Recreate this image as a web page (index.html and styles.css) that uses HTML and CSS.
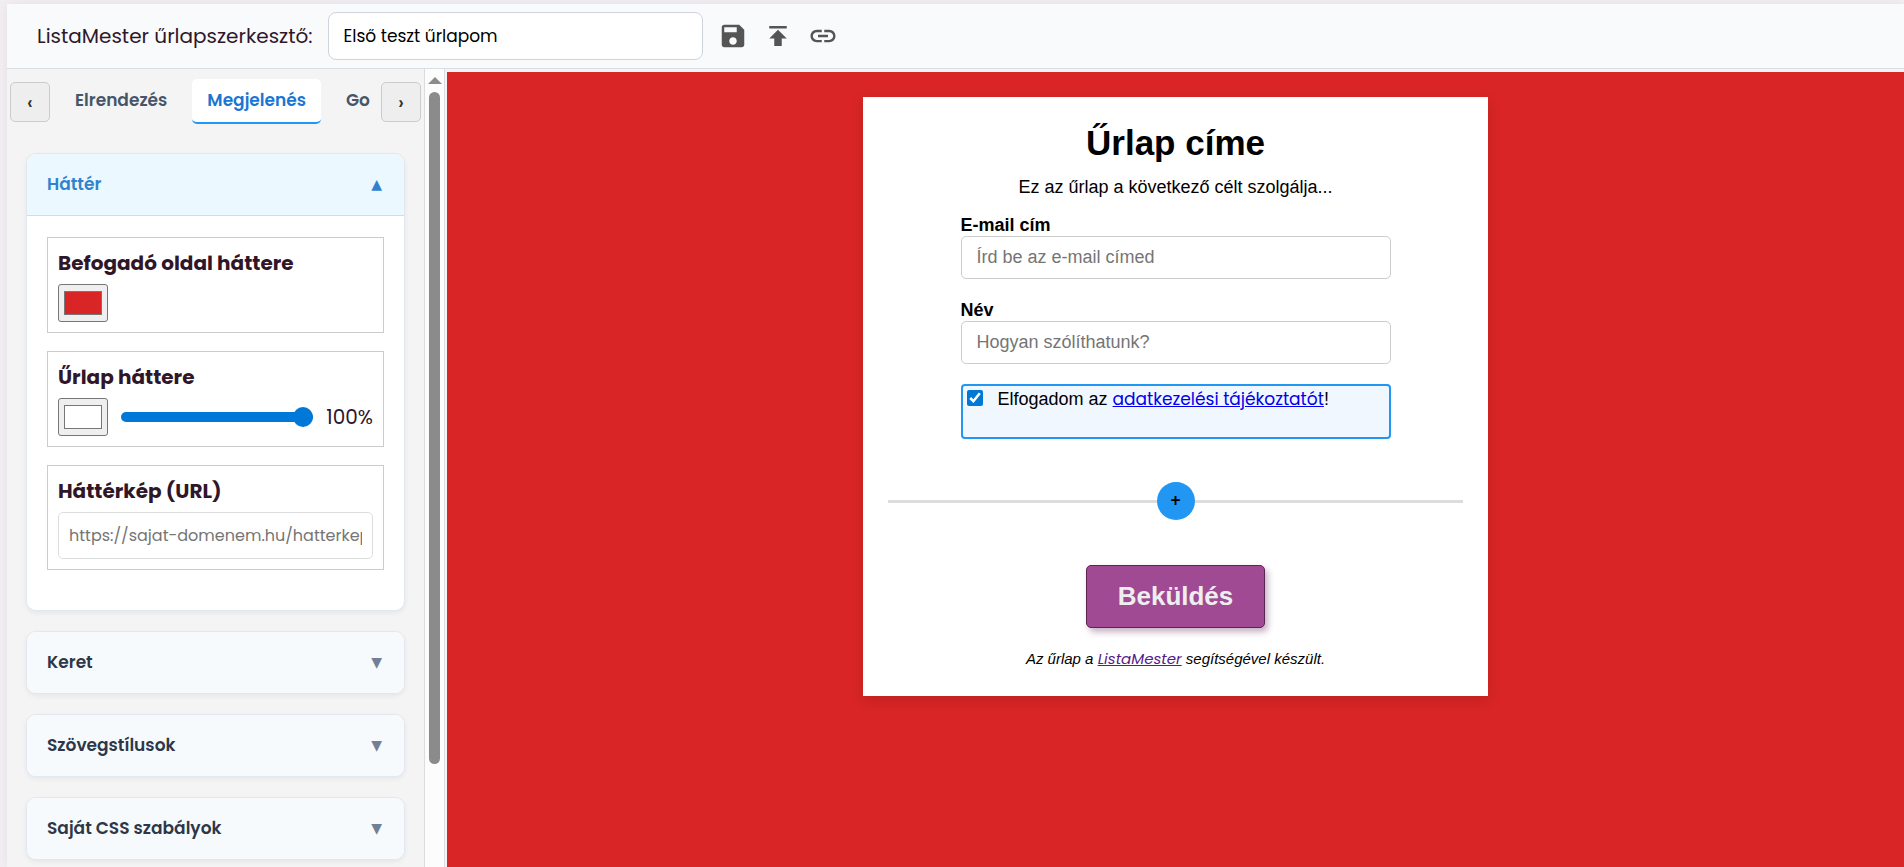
FILE: index.html
```html
<!DOCTYPE html>
<html lang="hu">
<head>
    <meta charset="UTF-8">
    <meta name="viewport" content="width=device-width, initial-scale=1.0">
    <title>ListaMester űrlapszerkesztő</title>
    <link rel="stylesheet" href="styles.css">
</head>
<body>
    <div class="app">
        <header class="topbar">
            <label class="topbar-label" for="formName">ListaMester űrlapszerkesztő:</label>
            <input class="form-name" type="text" id="formName" value="Első teszt űrlapom">
            <button class="icon-btn" type="button" aria-label="Mentés">
                <svg viewBox="0 0 24 24"><path d="M17 3H5c-1.11 0-2 .9-2 2v14c0 1.1.89 2 2 2h14c1.1 0 2-.9 2-2V7l-4-4zm-5 16c-1.66 0-3-1.34-3-3s1.34-3 3-3 3 1.34 3 3-1.34 3-3 3zm3-10H5V5h10v4z"/></svg>
            </button>
            <button class="icon-btn" type="button" aria-label="Közzététel">
                <svg viewBox="0 0 24 24"><path d="M5 4v2h14V4H5zm0 10h4v6h6v-6h4l-7-7-7 7z"/></svg>
            </button>
            <button class="icon-btn" type="button" aria-label="Link">
                <svg viewBox="0 0 24 24"><path d="M3.9 12c0-1.71 1.39-3.1 3.1-3.1h4V7H7c-2.76 0-5 2.24-5 5s2.24 5 5 5h4v-1.9H7c-1.71 0-3.1-1.39-3.1-3.1zM8 13h8v-2H8v2zm9-6h-4v1.9h4c1.71 0 3.1 1.39 3.1 3.1s-1.39 3.1-3.1 3.1h-4V17h4c2.76 0 5-2.24 5-5s-2.24-5-5-5z"/></svg>
            </button>
        </header>

        <div class="main">
            <aside class="sidebar">
                <div class="tabs">
                    <button class="tab-arrow" type="button">‹</button>
                    <div class="tab-list">
                        <button class="tab" type="button">Elrendezés</button>
                        <button class="tab active" type="button">Megjelenés</button>
                        <button class="tab" type="button">Go</button>
                    </div>
                    <button class="tab-arrow" type="button">›</button>
                </div>

                <div class="accordion">
                    <section class="panel open">
                        <button class="panel-header" type="button">Háttér <span class="arrow">▲</span></button>
                        <div class="panel-body">
                            <div class="setting">
                                <label class="setting-title" for="pageColor">Befogadó oldal háttere</label>
                                <div class="setting-row">
                                    <input class="color" type="color" id="pageColor" value="#d92525">
                                </div>
                            </div>
                            <div class="setting">
                                <label class="setting-title" for="formColor">Űrlap háttere</label>
                                <div class="setting-row">
                                    <input class="color" type="color" id="formColor" value="#ffffff">
                                    <input class="slider" type="range" min="0" max="100" value="100" aria-label="Átlátszóság">
                                    <span class="percent">100%</span>
                                </div>
                            </div>
                            <div class="setting">
                                <label class="setting-title" for="bgUrl">Háttérkép (URL)</label>
                                <input class="url" type="text" id="bgUrl" placeholder="https://sajat-domenem.hu/hatterkep.jpg">
                            </div>
                        </div>
                    </section>
                    <section class="panel">
                        <button class="panel-header" type="button">Keret <span class="arrow">▼</span></button>
                    </section>
                    <section class="panel">
                        <button class="panel-header" type="button">Szövegstílusok <span class="arrow">▼</span></button>
                    </section>
                    <section class="panel">
                        <button class="panel-header" type="button">Saját CSS szabályok <span class="arrow">▼</span></button>
                    </section>
                </div>
            </aside>

            <div class="scrollbar">
                <div class="scroll-up"></div>
                <div class="scroll-thumb"></div>
            </div>

            <main class="preview">
                <form class="form-card">
                    <h1 class="form-title">Űrlap címe</h1>
                    <p class="form-intro">Ez az űrlap a következő célt szolgálja...</p>
                    <div class="fields">
                        <div class="field">
                            <label for="email">E-mail cím</label>
                            <input type="email" id="email" placeholder="Írd be az e-mail címed">
                        </div>
                        <div class="field">
                            <label for="name">Név</label>
                            <input type="text" id="name" placeholder="Hogyan szólíthatunk?">
                        </div>
                        <div class="consent">
                            <input type="checkbox" id="consent" checked>
                            <label for="consent">Elfogadom az <a href="#">adatkezelési tájékoztatót</a>!</label>
                        </div>
                    </div>
                    <div class="add-row">
                        <button class="add-btn" type="button">+</button>
                    </div>
                    <button class="submit" type="button">Beküldés</button>
                    <p class="credit">Az űrlap a <a href="#">ListaMester</a> segítségével készült.</p>
                </form>
            </main>
        </div>
    </div>
</body>
</html>
```
FILE: styles.css
```css
* {
    box-sizing: border-box;
}
body {
    margin: 0;
    padding: 4px 0 0 7px;
    height: 100vh;
    overflow: hidden;
    background-color: #f3eef1;
    font-family: Poppins, Inter, sans-serif;
    font-size: 20px;
    color: #2f1629;
}
button, input {
    font-family: inherit;
}
button {
    cursor: pointer;
}
.app {
    display: flex;
    flex-direction: column;
    height: 100%;
    background-color: #f4f4f4;
    box-shadow: 0 0 12px rgba(0, 0, 0, 0.06);
}

/* top bar */
.topbar {
    display: flex;
    align-items: center;
    gap: 15px;
    padding: 8px 30px;
    background-color: #f8fafc;
    border-bottom: 1px solid #dadde4;
}
.form-name {
    width: 375px;
    height: 48px;
    padding: 0 15px;
    font-size: 17px;
    border: 1px solid #ced4da;
    border-radius: 8px;
}
.icon-btn {
    padding: 0;
    border: none;
    background: none;
}
.icon-btn svg {
    display: block;
    width: 30px;
    height: 30px;
    fill: #555;
}

.main {
    display: flex;
    flex: 1;
    min-height: 0;
}

/* sidebar */
.sidebar {
    width: 417px;
    flex-shrink: 0;
    overflow: hidden;
}
.tabs {
    display: flex;
    align-items: center;
    gap: 10px;
    padding: 10px 3px;
}
.tab-arrow {
    width: 40px;
    height: 40px;
    flex-shrink: 0;
    padding: 0;
    font-size: 20px;
    font-weight: 500;
    color: #333;
    background-color: #eee;
    border: 1px solid #ccc;
    border-radius: 5px;
}
.tab-list {
    display: flex;
    flex: 1;
    gap: 10px;
    overflow: hidden;
}
.tab {
    height: 45px;
    padding: 0 15px 2px;
    flex-shrink: 0;
    font-size: 17px;
    font-weight: 600;
    color: #475569;
    background: none;
    border: none;
    border-bottom: 2px solid transparent;
    border-radius: 5px;
}
.tab.active {
    color: #1976d2;
    background-color: #fff;
    border-bottom-color: #2196f3;
}
.accordion {
    display: flex;
    flex-direction: column;
    gap: 20px;
    padding: 19px;
}
.panel {
    overflow: hidden;
    flex-shrink: 0;
    background-color: #fff;
    border: 1px solid #e2e8f0;
    border-radius: 10px;
    box-shadow: 0 2px 5px rgba(0, 0, 0, 0.06);
}
.panel-header {
    display: flex;
    justify-content: space-between;
    align-items: center;
    width: 100%;
    height: 61px;
    padding: 0 22px 2px 20px;
    font-size: 17px;
    font-weight: 600;
    color: #2d3748;
    background-color: #f7fafc;
    border: none;
}
.arrow {
    font-family: "DejaVu Sans", sans-serif;
    font-size: 14px;
    color: #718096;
}
.open .panel-header {
    height: 62px;
    color: #3182ce;
    background-color: #ebf8ff;
    border-bottom: 1px solid #bee3f8;
}
.open .arrow {
    color: #3182ce;
}
.panel-body {
    display: flex;
    flex-direction: column;
    gap: 18px;
    padding: 21px 20px 40px;
}
.setting {
    padding: 10px;
    border: 1px solid #ccc;
}
.setting-title {
    display: block;
    margin-bottom: 6px;
    line-height: 30px;
    font-weight: 700;
}
.setting-row {
    display: flex;
    align-items: center;
    gap: 13px;
}
.color {
    width: 50px;
    height: 38px;
    padding: 2px 3px;
    background-color: #efefef;
    border: 1px solid #767676;
    border-radius: 3px;
}
.slider {
    flex: 1;
    min-width: 0;
    height: 10px;
    margin: 0;
    appearance: none;
    background-color: #0078d7;
    border-radius: 5px;
}
.slider::-webkit-slider-thumb {
    appearance: none;
    width: 20px;
    height: 20px;
    background-color: #0078d7;
    border-radius: 50%;
}
.url {
    display: block;
    width: 100%;
    height: 47px;
    padding: 0 10px;
    font-size: 16px;
    border: 1px solid #ddd;
    border-radius: 5px;
}
.url::placeholder {
    color: #757575;
}

/* scrollbar */
.scrollbar {
    display: flex;
    flex-direction: column;
    align-items: center;
    gap: 8px;
    width: 21px;
    flex-shrink: 0;
    padding-top: 8px;
    background-color: #fcfcfc;
    border-left: 1px solid #dadde0;
    border-right: 1px solid #dadde4;
}
.scroll-up {
    border: 7px solid transparent;
    border-top: none;
    border-bottom-color: #8b8b8b;
}
.scroll-thumb {
    width: 11px;
    height: 85%;
    background-color: #8b8b8b;
    border-radius: 6px;
}

/* preview */
.preview {
    flex: 1;
    margin: 3px 0 0 2px;
    padding: 25px;
    background-color: #d92525;
    font-family: "Liberation Sans", Arial, sans-serif;
    font-size: 18px;
    color: #000;
}
.form-card {
    display: flex;
    flex-direction: column;
    align-items: center;
    max-width: 625px;
    margin: 0 auto;
    padding: 25px;
    background-color: #fff;
    box-shadow: 0 4px 12px rgba(0, 0, 0, 0.12);
}
.form-title {
    margin: 0;
    font-size: 35px;
    line-height: 42px;
}
.form-intro {
    margin: 12px 0 16px;
    line-height: 22px;
}
.fields {
    display: flex;
    flex-direction: column;
    gap: 20px;
    width: 430px;
    max-width: 100%;
}
.field label {
    display: block;
    line-height: 22px;
    font-weight: bold;
}
.field input {
    display: block;
    width: 100%;
    height: 43px;
    padding: 0 15px;
    font-size: 18px;
    border: 1px solid #ccc;
    border-radius: 5px;
}
.consent {
    display: flex;
    gap: 15px;
    height: 55px;
    padding: 3px 4px;
    line-height: 20px;
    background-color: #f0f7ff;
    border: 2px solid #2196f3;
    border-radius: 4px;
}
.consent input {
    width: 16px;
    height: 16px;
    margin: 1px 0;
    accent-color: #0078d7;
}
.consent a, .credit a {
    font-family: Poppins, Inter, sans-serif;
}
.consent a {
    font-size: 17px;
    color: #0000ee;
}
.add-row {
    display: flex;
    align-items: center;
    width: 100%;
    margin: 43px 0 45px;
}
.add-row::before, .add-row::after {
    content: "";
    flex: 1;
    height: 3px;
    background-color: #ddd;
}
.add-btn {
    width: 38px;
    height: 38px;
    padding: 0;
    font-size: 17px;
    font-weight: 500;
    font-family: Poppins, Inter, sans-serif;
    background-color: #2196f3;
    border: none;
    border-radius: 50%;
}
.submit {
    height: 63px;
    padding: 0 31px;
    font-size: 26px;
    font-weight: bold;
    color: #eee;
    background-color: #9f4a92;
    border: 1px solid #5c2454;
    border-radius: 5px;
    box-shadow: 3px 4px 6px rgba(92, 36, 84, 0.35);
}
.credit {
    margin: 20px 0 1px;
    font-size: 15px;
    line-height: 22px;
    font-style: italic;
}
.credit a {
    color: #551a8b;
}
```
